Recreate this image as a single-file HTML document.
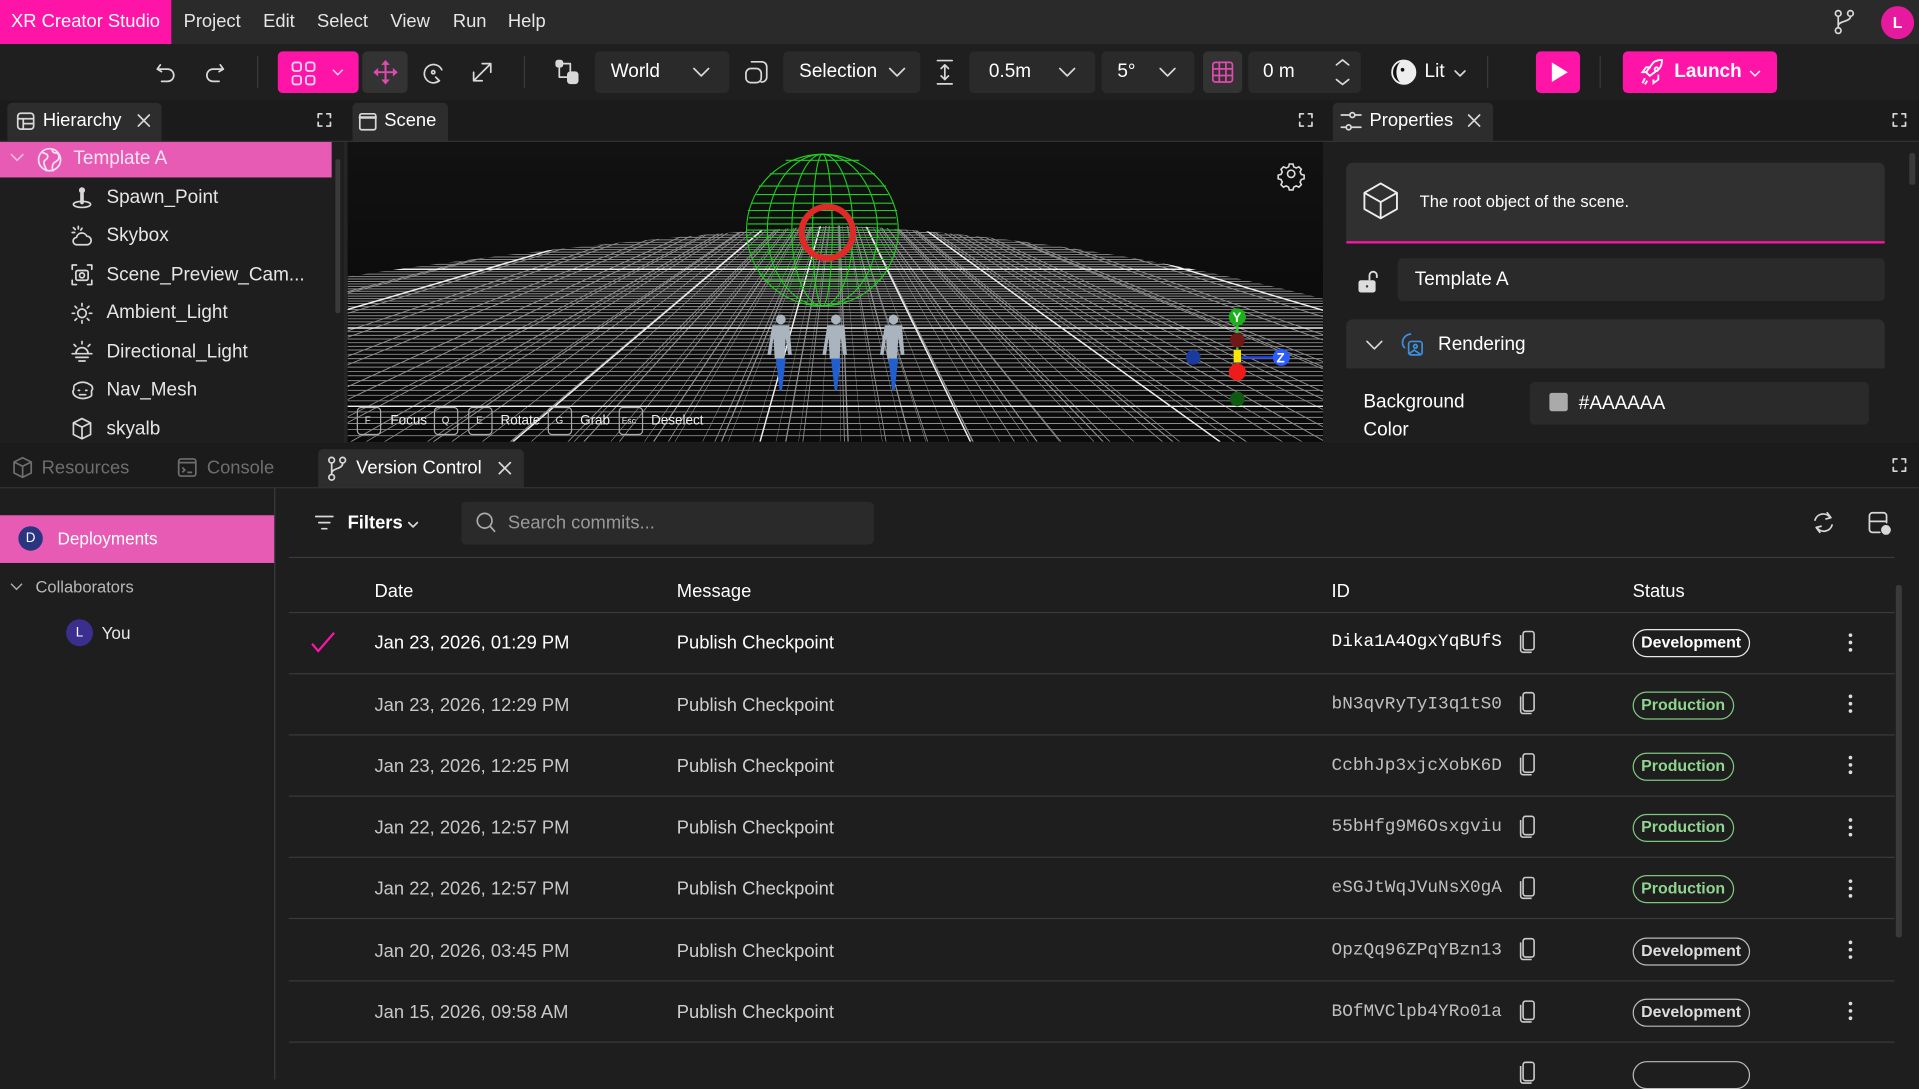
<!DOCTYPE html>
<html><head><meta charset="utf-8">
<style>
*{box-sizing:border-box;margin:0;padding:0}
html,body{width:1919px;height:1079px;overflow:hidden;background:#1e1e1e}
#s{position:absolute;left:0;top:0;width:1568px;height:882px;transform:scale(1.22385);transform-origin:0 0;font-family:"Liberation Sans",sans-serif;color:#e6e6e6;font-size:15px;background:#1e1e1e}
.a{position:absolute}
.t{position:absolute;white-space:nowrap;line-height:1}
svg{position:absolute;overflow:visible}
.ic{fill:none;stroke:#d8d8d8;stroke-width:1.4;stroke-linecap:round;stroke-linejoin:round}
.dd{position:absolute;background:#2a2a2a;border-radius:4px;height:34px;top:42px}
.row{position:absolute;left:236px;width:1312px;height:50px;border-bottom:1px solid #3a3a3a}
.badge{position:absolute;height:23px;border-radius:12px;border:1.3px solid #e8e8e8;font-weight:bold;font-size:13px;line-height:20px;padding:0 6px;color:#fff}
.prod{border-color:#7fc77f;color:#8fd48f}
.id{font-family:"Liberation Mono",monospace;font-size:14.5px}
.tb{font-size:15px}
</style></head><body><div id="s">
<!-- menubar -->
<div class="a" style="left:0;top:0;width:1568px;height:36px;background:#2a2a2a"></div>
<div class="a" style="left:0;top:0;width:140px;height:36px;background:#ff14a8"></div>
<div class="t" style="left:9px;top:10px;color:#fff;font-size:15px">XR Creator Studio</div>
<div class="t" style="left:150px;top:10px;font-size:15px">Project</div>
<div class="t" style="left:215px;top:10px;font-size:15px">Edit</div>
<div class="t" style="left:259px;top:10px;font-size:15px">Select</div>
<div class="t" style="left:319px;top:10px;font-size:15px">View</div>
<div class="t" style="left:370px;top:10px;font-size:15px">Run</div>
<div class="t" style="left:415px;top:10px;font-size:15px">Help</div>
<svg style="left:1498px;top:8px" width="20" height="20" class="ic"><circle cx="4" cy="3" r="2.3"/><circle cx="14" cy="3" r="2.3"/><circle cx="4" cy="17" r="2.3"/><path d="M4 5.5V14.5M14 5.5C14 10 4 9 4 13"/></svg>
<div class="a" style="left:1537px;top:5px;width:27px;height:27px;border-radius:50%;background:#e61a9e;color:#fff;font-size:13px;font-weight:bold;text-align:center;line-height:27px">L</div>
<!-- toolbar -->
<div class="a" style="left:0;top:36px;width:1568px;height:46px;background:#1f1f1f"></div>
<svg style="left:127px;top:50px" width="18" height="18" class="ic"><path d="M4 3L1.5 6.5 5 8.5M2 6.5H10a5 5 0 0 1 0 10H5"/></svg>
<svg style="left:166px;top:50px" width="18" height="18" class="ic"><path d="M14 3l2.5 3.5L13 8.5M16 6.5H8a5 5 0 0 0 0 10h5"/></svg>
<div class="a" style="left:210px;top:46px;width:1px;height:26px;background:#3a3a3a"></div>
<div class="a" style="left:227px;top:42px;width:66px;height:34px;background:#ff14a8;border-radius:4px"></div>
<svg style="left:238px;top:50px" width="20" height="20" fill="none" stroke="#ffd4ee" stroke-width="1.5"><rect x="1" y="1" width="7" height="7" rx="2"/><rect x="12" y="1" width="7" height="7" rx="2"/><rect x="1" y="12" width="7" height="7" rx="2"/><rect x="12" y="12" width="7" height="7" rx="2"/></svg>
<svg style="left:271px;top:56px" width="10" height="6" fill="none" stroke="#ffd4ee" stroke-width="1.2"><path d="M1 1l4 4 4-4"/></svg>
<div class="a" style="left:296px;top:42px;width:37px;height:34px;background:#333;border-radius:4px"></div>
<svg style="left:304px;top:48px" width="22" height="22" fill="#e04ab0" stroke="#e04ab0" stroke-width="1.6"><path d="M11 3V19M3 11H19" /><path d="M11 1l-3.5 4h7zM11 21l-3.5-4h7zM1 11l4-3.5v7zM21 11l-4-3.5v7z" stroke="none"/></svg>
<svg style="left:344px;top:49px" width="20" height="20" class="ic"><path d="M15 17A7.5 7.5 0 1 1 17 8"/><path d="M12 14l3 3-3.5 1.5"/><circle cx="10" cy="10" r="1.3"/></svg>
<svg style="left:384px;top:49px" width="20" height="20" class="ic"><path d="M3 17L17 3M10 3h7v7M3 10v7h7"/></svg>
<div class="a" style="left:428px;top:46px;width:1px;height:26px;background:#3a3a3a"></div>
<svg style="left:453px;top:48px" width="20" height="22" class="ic"><rect x="1.5" y="1.5" width="5" height="5" rx="1.5" fill="#d8d8d8"/><path d="M4 7v8h6M7 4h6v6"/><rect x="11" y="11" width="8" height="9" rx="2" fill="#d8d8d8"/></svg>
<div class="dd" style="left:486px;width:110px"></div>
<div class="t" style="left:499px;top:51px;font-size:15.5px;color:#fff">World</div>
<svg style="left:566px;top:55px" width="14" height="8" class="ic"><path d="M1 1l6 6 6-6"/></svg>
<svg style="left:608px;top:49px" width="20" height="20" class="ic"><path d="M6 1.5h8.5a4 4 0 0 1 4 4V14a4 4 0 0 1-4 4H14M1.5 11a4 4 0 0 1 4-4H10a4 4 0 0 1 4 4v3.5a4 4 0 0 1-4 4H5.5a4 4 0 0 1-4-4z"/></svg>
<div class="dd" style="left:640px;width:112px"></div>
<div class="t" style="left:653px;top:51px;font-size:15.5px;color:#fff">Selection</div>
<svg style="left:726px;top:55px" width="14" height="8" class="ic"><path d="M1 1l6 6 6-6"/></svg>
<svg style="left:764px;top:48px" width="16" height="22" class="ic"><path d="M2 1.5h12M2 20.5h12M8 5v12M5 8l3-3 3 3M5 14l3 3 3-3"/></svg>
<div class="dd" style="left:792px;width:103px"></div>
<div class="t" style="left:808px;top:51px;font-size:15.5px;color:#fff">0.5m</div>
<svg style="left:865px;top:55px" width="14" height="8" class="ic"><path d="M1 1l6 6 6-6"/></svg>
<div class="dd" style="left:900px;width:76px"></div>
<div class="t" style="left:913px;top:51px;font-size:15.5px;color:#fff">5°</div>
<svg style="left:947px;top:55px" width="14" height="8" class="ic"><path d="M1 1l6 6 6-6"/></svg>
<div class="a" style="left:983px;top:42px;width:32px;height:34px;background:#333;border-radius:4px"></div>
<svg style="left:990px;top:50px" width="18" height="18" fill="none" stroke="#e04ab0" stroke-width="1.4"><rect x="1" y="1" width="16" height="16" rx="2"/><path d="M6.3 1v16M11.7 1v16M1 6.3h16M1 11.7h16"/></svg>
<div class="dd" style="left:1020px;width:92px"></div>
<div class="t" style="left:1032px;top:51px;font-size:15.5px;color:#fff">0 m</div>
<svg style="left:1090px;top:47px" width="14" height="24" class="ic"><path d="M2 6l5-4 5 4M2 18l5 4 5-4"/></svg>
<svg style="left:1136px;top:48px" width="22" height="22"><circle cx="11" cy="11" r="9.5" fill="#111" stroke="#eee" stroke-width="1.5"/><path d="M11 1.5a9.5 9.5 0 0 1 0 19a6 9.5 0 0 1 0-19z" fill="#eee"/><circle cx="10" cy="9" r="1.5" fill="#111"/></svg>
<div class="t" style="left:1164px;top:51px;font-size:15.5px;color:#fff">Lit</div>
<svg style="left:1188px;top:57px" width="10" height="6" class="ic"><path d="M1 1l4 4 4-4"/></svg>
<div class="a" style="left:1215px;top:46px;width:1px;height:26px;background:#3a3a3a"></div>
<div class="a" style="left:1255px;top:42px;width:36px;height:34px;background:#ff14a8;border-radius:4px"></div>
<svg style="left:1266px;top:50px" width="16" height="18"><path d="M2 1l13 8-13 8z" fill="#fff"/></svg>
<div class="a" style="left:1307px;top:46px;width:1px;height:26px;background:#3a3a3a"></div>
<div class="a" style="left:1326px;top:42px;width:126px;height:34px;background:#ff14a8;border-radius:4px"></div>
<svg style="left:1340px;top:48px" width="22" height="22" fill="none" stroke="#fff" stroke-width="1.5"><path d="M8 14l-3-3 6-8c2-1.5 5-2 7-2 0 2-.5 5-2 7l-8 6z"/><circle cx="13.5" cy="8.5" r="1.5"/><path d="M5 11l-3 0 3-4h4M11 17l0 3 4-3v-4M4 16l-2 4M6 18l-2 3"/></svg>
<div class="t" style="left:1368px;top:51px;font-size:15.5px;color:#fff;font-weight:bold">Launch</div>
<svg style="left:1429px;top:57px" width="10" height="6" fill="none" stroke="#fff" stroke-width="1.2"><path d="M1 1l4 4 4-4"/></svg>

<!-- top panel tab strips -->
<div class="a" style="left:0;top:82px;width:1568px;height:34px;background:#1b1b1b"></div>
<div class="a" style="left:6px;top:84px;width:126px;height:32px;background:#2d2d2d;border-radius:4px 4px 0 0"></div>
<svg style="left:13px;top:91px" width="16" height="16" class="ic"><rect x="1.5" y="1.5" width="13" height="13" rx="2.5"/><path d="M1.5 6h13M6 6v8.5M6 10h8.5"/></svg>
<div class="t" style="left:35px;top:91px;font-size:15px;color:#fff">Hierarchy</div>
<svg style="left:112px;top:93px" width="11" height="11" class="ic"><path d="M1 1l9 9M10 1l-9 9"/></svg>
<svg style="left:259px;top:92px" width="12" height="12" class="ic"><path d="M1 4V1h3M8 1h3v3M11 8v3H8M4 11H1V8"/></svg>
<div class="a" style="left:288px;top:84px;width:78px;height:32px;background:#2d2d2d;border-radius:4px 4px 0 0"></div>
<svg style="left:293px;top:92px" width="15" height="15" class="ic"><rect x="1" y="1" width="13" height="13" rx="1.5"/><path d="M1 4h13" stroke-width="2"/></svg>
<div class="t" style="left:314px;top:91px;font-size:15px;color:#fff">Scene</div>
<svg style="left:1061px;top:92px" width="12" height="12" class="ic"><path d="M1 4V1h3M8 1h3v3M11 8v3H8M4 11H1V8"/></svg>
<div class="a" style="left:1089px;top:84px;width:131px;height:32px;background:#2d2d2d;border-radius:4px 4px 0 0"></div>
<svg style="left:1095px;top:91px" width="18" height="16" class="ic"><path d="M1 3h7M12 3h5M1 13h4M9 13h8"/><circle cx="10" cy="3" r="2"/><circle cx="7" cy="13" r="2"/></svg>
<div class="t" style="left:1119px;top:91px;font-size:15px;color:#fff">Properties</div>
<svg style="left:1199px;top:93px" width="11" height="11" class="ic"><path d="M1 1l9 9M10 1l-9 9"/></svg>
<svg style="left:1546px;top:92px" width="12" height="12" class="ic"><path d="M1 4V1h3M8 1h3v3M11 8v3H8M4 11H1V8"/></svg>
<div class="a" style="left:0;top:115px;width:1568px;height:1px;background:#333"></div>

<!-- hierarchy -->
<div class="a" style="left:0;top:116px;width:271px;height:29px;background:#e85bb5"></div>
<svg style="left:8px;top:125px" width="12" height="8" fill="none" stroke="#f7c3e3" stroke-width="1.2"><path d="M1 1l5 5 5-5"/></svg>
<svg style="left:30px;top:120px" width="21" height="21" fill="none" stroke="#fde0f1" stroke-width="1.4"><circle cx="10.5" cy="10.5" r="9"/><path d="M4 4c2 2 5 1 5 4s-4 2-3 6 2 3 2 6M13 2c-1 2 1 3 3 3s3 4 1 6-3 1-4 4 1 4 0 5"/></svg>
<div class="t" style="left:60px;top:122px;font-size:15.5px;color:#fde6f3">Template A</div>
<div class="t" style="left:87px;top:154px;font-size:15.5px">Spawn_Point</div>
<div class="t" style="left:87px;top:185px;font-size:15.5px">Skybox</div>
<div class="t" style="left:87px;top:217px;font-size:15.5px">Scene_Preview_Cam...</div>
<div class="t" style="left:87px;top:248px;font-size:15.5px">Ambient_Light</div>
<div class="t" style="left:87px;top:280px;font-size:15.5px">Directional_Light</div>
<div class="t" style="left:87px;top:311px;font-size:15.5px">Nav_Mesh</div>
<div class="t" style="left:87px;top:343px;font-size:15.5px">skyalb</div>
<svg style="left:58px;top:153px" width="18" height="18" class="ic"><circle cx="9" cy="2.5" r="1.8" fill="#d8d8d8"/><path d="M9 5.5v7" stroke-width="3"/><ellipse cx="9" cy="14" rx="7" ry="2.5"/></svg>
<svg style="left:58px;top:184px" width="18" height="18" class="ic"><path d="M5 16h8a3.5 3.5 0 0 0 0-7 4.5 4.5 0 0 0-8.5 1A3 3 0 0 0 5 16zM2 2l1.5 1.5M6 1v2M1 6h2M9 2.5L8 4"/></svg>
<svg style="left:58px;top:215px" width="18" height="19" class="ic"><path d="M1 5V1.5h3.5M13.5 1.5H17V5M17 14v3.5h-3.5M4.5 17.5H1V14"/><rect x="4" y="6" width="10" height="8" rx="1.5"/><circle cx="9" cy="10" r="2"/></svg>
<svg style="left:58px;top:247px" width="18" height="18" class="ic"><circle cx="9" cy="9" r="3.5"/><path d="M9 1v2M9 15v2M1 9h2M15 9h2M3.3 3.3l1.4 1.4M13.3 13.3l1.4 1.4M3.3 14.7l1.4-1.4M13.3 4.7l1.4-1.4"/></svg>
<svg style="left:58px;top:278px" width="18" height="18" class="ic"><path d="M4 11a5 5 0 0 1 10 0zM1 11h16M4 14h10M6.5 17h5M9 1v2M2.5 3.5l1.5 1.5M15.5 3.5L14 5"/></svg>
<svg style="left:58px;top:310px" width="19" height="18" class="ic"><path d="M4 4a8 6 0 0 1 11 0M15 4c3 1 3 4 2 5s1 4-1 5-7 3-12 0c-2-1-3-4-2-5s-1-4 2-5"/><path d="M6 9h1M12 9h1M7 12.5h5"/></svg>
<svg style="left:58px;top:341px" width="18" height="18" class="ic"><path d="M9 1l7 3.5V14l-7 3.5L2 14V4.5zM2 4.5l7 3.5 7-3.5M9 8v9"/></svg>
<div class="a" style="left:274px;top:130px;width:4px;height:126px;background:#3a3a3a;border-radius:2px"></div>
<div class="a" style="left:281px;top:116px;width:3px;height:246px;background:#252525"></div>

<!-- scene -->
<div class="a" style="left:284px;top:116px;width:797px;height:245px;overflow:hidden;background:linear-gradient(#121212,#050505)">
<svg width="797" height="245" viewBox="0 0 797 245">
<defs><clipPath id="cp"><path d="M0 110 Q 200 80 400 68 Q 600 78 797 128 L797 245 L0 245Z"/></clipPath></defs>
<g clip-path="url(#cp)">
<rect width="797" height="245" fill="#0a0a0a"/>
<g stroke="#8a8a8a" stroke-width="0.8">
<path d="M0 70H797M0 72H797M0 74H797M0 76H797M0 78H797M0 80H797M0 82H797M0 84H797M0 86H797M0 88H797M0 90H797M0 92H797M0 94H797M0 96H797M0 98H797M0 100H797M0 102H797M0 104H797M0 106H797M0 108H797M0 110H797M0 112H797M0 114H797M0 116H797M0 118H797M0 120H797M0 122H797M0 124H797M0 126H797M0 128H797M0 130H797M0 132H797M0 134.5H797M0 137H797M0 139.5H797M0 142H797M0 144.5H797M0 147H797M0 149.5H797M0 152H797M0 155H797M0 158H797M0 161H797M0 164H797M0 167H797M0 170H797M0 173.5H797M0 177H797M0 180.5H797M0 184H797M0 187.5H797M0 191H797M0 195H797M0 199H797M0 203H797M0 207H797M0 211.5H797M0 216H797M0 220.5H797M0 225H797M0 230H797M0 235H797M0 240H797"/>
</g>
<g id="vl" stroke="#8f8f8f" stroke-width="0.7">
<path d="M400 20L-600 245M400 20L-480 245M400 20L-370 245M400 20L-270 245M400 20L-180 245M400 20L-100 245M400 20L-30 245M400 20L30 245M400 20L85 245M400 20L135 245M400 20L180 245M400 20L222 245M400 20L262 245M400 20L300 245M400 20L337 245M400 20L372 245M400 20L406 245M400 20L440 245M400 20L474 245M400 20L509 245M400 20L545 245M400 20L583 245M400 20L623 245M400 20L666 245M400 20L713 245M400 20L764 245M400 20L820 245M400 20L885 245M400 20L960 245M400 20L1050 245M400 20L1160 245M400 20L1300 245M400 20L1480 245"/>
</g>
<use href="#vl" transform="translate(400,0) scale(1.5,1) translate(-400,0)"/>
<use href="#vl" transform="translate(400,0) scale(0.5,1) translate(-400,0)"/>
<g stroke="#eee" stroke-width="1.2">
<path d="M0 104H797M0 152H797M0 216H797M400 20L-370 245M400 20L135 245M400 20L337 245M400 20L509 245M400 20L713 245M400 20L1160 245"/>
</g>
</g>
<g fill="none" stroke="#1fcf1f" stroke-width="0.9">
<circle cx="388" cy="72" r="62"/>
<ellipse cx="388" cy="72" rx="45" ry="62"/><ellipse cx="388" cy="72" rx="25" ry="62"/><ellipse cx="388" cy="72" rx="8" ry="62"/>
<path d="M330 50H446M328 62H448M326 72H450M328 84H448M330 96H446M336 108H440M345 118H431M345 26H431M336 36H440M358 15H418M334 43H442M327 56H449M327 67H449M327 78H449M328 90H448M333 102H443M340 113H436"/>
</g>
<circle cx="392" cy="74" r="21" fill="none" stroke="#e02a2a" stroke-width="5"/>
<g fill="#aab4bf">
<g transform="translate(354,140)"><circle cx="0" cy="5" r="4"/><path d="M-7 10h14l2 24h-3l-2-14 -1 17h-8l-1-17-2 14h-3z"/><path d="M-4 37h8l-3 26h-2z" fill="#1f5fcf"/></g>
<g transform="translate(399,140)"><circle cx="0" cy="5" r="4"/><path d="M-7 10h14l2 24h-3l-2-14 -1 17h-8l-1-17-2 14h-3z"/><path d="M-4 37h8l-3 26h-2z" fill="#1f5fcf"/></g>
<g transform="translate(446,140)"><circle cx="0" cy="5" r="4"/><path d="M-7 10h14l2 24h-3l-2-14 -1 17h-8l-1-17-2 14h-3z"/><path d="M-4 37h8l-3 26h-2z" fill="#1f5fcf"/></g>
</g>
<g transform="translate(727,176)">
<path d="M0 0H36" stroke="#1f3fe0" stroke-width="2"/><path d="M0 0V-30" stroke="#2bd12b" stroke-width="2"/>
<rect x="-3" y="-6" width="6" height="10" fill="#ffe600"/>
<circle cx="0" cy="-33" r="7" fill="#19b319"/><text x="-4" y="-29" font-size="11" font-weight="bold" fill="#fff" font-family="Liberation Sans">Y</text>
<circle cx="36" cy="0" r="7" fill="#2b5cff"/><text x="32" y="4" font-size="11" font-weight="bold" fill="#fff" font-family="Liberation Sans">Z</text>
<circle cx="0" cy="-14" r="6" fill="#701818"/><circle cx="0" cy="12" r="7" fill="#ee1b1b"/>
<circle cx="-36" cy="0" r="6" fill="#1b3a9e"/><circle cx="0" cy="34" r="6" fill="#0f5a12"/>
</g>
<g font-family="Liberation Sans" font-size="11" fill="#eee"><g fill="none" stroke="#aaa" stroke-width="1"><rect x="8" y="217" width="19" height="22" rx="3"/><rect x="71" y="217" width="19" height="22" rx="3"/><rect x="99" y="217" width="19" height="22" rx="3"/><rect x="164" y="217" width="19" height="22" rx="3"/><rect x="222" y="217" width="19" height="22" rx="3"/></g>
<text x="14" y="230" font-size="8">F</text><text x="35" y="231">Focus</text><text x="77" y="230" font-size="8">Q</text><text x="105" y="230" font-size="8">E</text><text x="125" y="231">Rotate</text><text x="170" y="230" font-size="8">G</text><text x="190" y="231">Grab</text><text x="224" y="230" font-size="7">Esc</text><text x="248" y="231">Deselect</text></g>
<g transform="translate(771,26)" fill="none" stroke="#ddd" stroke-width="1.3"><circle r="3"/><path d="M-1.5-8h3l.6 2.3 2 1 2.2-1 2 2-1 2.2 1 2 2.3.6v3l-2.3.6-1 2 1 2.2-2 2-2.2-1-2 1-.6 2.3h-3l-.6-2.3-2-1-2.2 1-2-2 1-2.2-1-2-2.3-.6v-3l2.3-.6 1-2-1-2.2 2-2 2.2 1 2-1z"/></g>
</svg></div>

<!-- properties -->
<div class="a" style="left:1100px;top:133px;width:440px;height:66px;background:#303030;border-radius:5px 5px 0 0;border-bottom:2px solid #ff14a8"></div>
<svg style="left:1112px;top:148px" width="34" height="34" fill="none" stroke="#eee" stroke-width="1.6" stroke-linejoin="round"><path d="M17 2l14 8v14l-14 8-14-8V10zM3 10l14 8 14-8M17 18v14" transform="scale(0.95)"/></svg>
<div class="t" style="left:1160px;top:158px;font-size:13.5px;color:#fff">The root object of the scene.</div>
<svg style="left:1109px;top:220px" width="20" height="20"><rect x="1" y="9" width="14" height="10" rx="2" fill="#ddd"/><path d="M10 9V5a3 3 0 0 1 6 0v2" fill="none" stroke="#ddd" stroke-width="1.5"/><circle cx="8" cy="14" r="1" fill="#333"/></svg>
<div class="a" style="left:1142px;top:211px;width:398px;height:35px;background:#2a2a2a;border-radius:4px"></div>
<div class="t" style="left:1156px;top:221px;font-size:15.5px;color:#fff">Template A</div>
<div class="a" style="left:1100px;top:261px;width:440px;height:40px;background:#2e2e2e;border-radius:5px 5px 0 0"></div>
<svg style="left:1116px;top:278px" width="14" height="8" class="ic"><path d="M1 1l6 6 6-6"/></svg>
<svg style="left:1144px;top:271px" width="20" height="20" fill="none" stroke="#3d8fe0" stroke-width="1.4"><path d="M9 2a7 7 0 0 0-7 7c0 2 1 3.5 2 4.5"/><rect x="7" y="8" width="11" height="11" rx="2"/><circle cx="12.5" cy="12" r="1.5"/><path d="M7.5 18l4-3 6 4"/></svg>
<div class="t" style="left:1175px;top:274px;font-size:15.5px;color:#fff">Rendering</div>
<div class="t" style="left:1114px;top:321px;font-size:15.5px;color:#fff">Background</div>
<div class="t" style="left:1114px;top:344px;font-size:15.5px;color:#fff">Color</div>
<div class="a" style="left:1250px;top:312px;width:277px;height:35px;background:#2a2a2a;border-radius:4px"></div>
<div class="a" style="left:1266px;top:321px;width:15px;height:15px;background:#aaa;border-radius:2px"></div>
<div class="t" style="left:1290px;top:322px;font-size:15.5px;color:#fff">#AAAAAA</div>
<div class="a" style="left:1560px;top:125px;width:5px;height:26px;background:#3a3a3a;border-radius:2px"></div>

<!-- bottom tabs -->
<div class="a" style="left:0;top:362px;width:1568px;height:36px;background:#1b1b1b"></div>
<svg style="left:10px;top:373px" width="17" height="18" fill="none" stroke="#6e6e6e" stroke-width="1.4"><path d="M8.5 1l7 3.5v9l-7 3.5-7-3.5v-9zM1.5 4.5l7 3.5 7-3.5M8.5 8v9"/></svg>
<div class="t" style="left:34px;top:375px;font-size:15px;color:#6e6e6e">Resources</div>
<svg style="left:145px;top:374px" width="16" height="16" fill="none" stroke="#6e6e6e" stroke-width="1.4"><rect x="1" y="1" width="14" height="14" rx="2"/><path d="M1 4h14M4 8l2 2-2 2M8 12h4"/></svg>
<div class="t" style="left:169px;top:375px;font-size:15px;color:#6e6e6e">Console</div>
<div class="a" style="left:260px;top:367px;width:168px;height:31px;background:#2d2d2d;border-radius:4px 4px 0 0"></div>
<svg style="left:267px;top:373px" width="18" height="20" class="ic"><circle cx="4" cy="3" r="2.3"/><circle cx="13" cy="3" r="2.3"/><circle cx="4" cy="17" r="2.3"/><path d="M4 5.5v9M13 5.5c0 5-9 4-9 8"/></svg>
<div class="t" style="left:291px;top:375px;font-size:15px;color:#fff">Version Control</div>
<svg style="left:407px;top:377px" width="11" height="11" class="ic"><path d="M1 1l9 9M10 1l-9 9"/></svg>
<svg style="left:1546px;top:374px" width="12" height="12" class="ic"><path d="M1 4V1h3M8 1h3v3M11 8v3H8M4 11H1V8"/></svg>
<div class="a" style="left:0;top:398px;width:1568px;height:1px;background:#333"></div>

<!-- left sidebar -->
<div class="a" style="left:224px;top:399px;width:1px;height:483px;background:#3a3a3a"></div>
<div class="a" style="left:0;top:421px;width:224px;height:39px;background:#e85bb5"></div>
<div class="a" style="left:15px;top:430px;width:20px;height:20px;border-radius:50%;background:#2a3580;color:#fff;font-size:11px;text-align:center;line-height:20px">D</div>
<div class="t" style="left:47px;top:433px;font-size:14px;color:#fff">Deployments</div>
<svg style="left:8px;top:476px" width="11" height="7" fill="none" stroke="#aaa" stroke-width="1.2"><path d="M1 1l4.5 4.5L10 1"/></svg>
<div class="t" style="left:29px;top:473px;font-size:13.5px;color:#b8b8b8">Collaborators</div>
<div class="a" style="left:54px;top:506px;width:22px;height:22px;border-radius:50%;background:#3a2f8f;color:#fff;font-size:11px;text-align:center;line-height:22px">L</div>
<div class="t" style="left:83px;top:510px;font-size:14px;color:#e8e8e8">You</div>

<!-- VC toolbar -->
<svg style="left:257px;top:420px" width="16" height="14" class="ic"><path d="M1 2h14M3.5 7h9M6 12h4"/></svg>
<div class="t" style="left:284px;top:420px;font-size:15px;color:#fff;font-weight:bold">Filters</div>
<svg style="left:333px;top:426px" width="9" height="6" class="ic"><path d="M1 1l3.5 3.5L8 1"/></svg>
<div class="a" style="left:377px;top:410px;width:337px;height:35px;background:#2a2a2a;border-radius:4px"></div>
<svg style="left:388px;top:418px" width="18" height="18" fill="none" stroke="#aaa" stroke-width="1.4"><circle cx="8" cy="7.5" r="6"/><path d="M12.5 12l4 4.5"/></svg>
<div class="t" style="left:415px;top:420px;font-size:15px;color:#9a9a9a">Search commits...</div>
<svg style="left:1480px;top:416px" width="20" height="22" class="ic"><path d="M15.5 7A7 7 0 0 0 3 9M4.5 15A7 7 0 0 0 17 13"/><path d="M13 3l3 4-4 1M7 19l-3-4 4-1"/></svg>
<svg style="left:1526px;top:418px" width="20" height="20" class="ic"><path d="M10 17H4a2.5 2.5 0 0 1-2.5-2.5v-11A2.5 2.5 0 0 1 4 1h9a2.5 2.5 0 0 1 2.5 2.5V9M1.5 8h14"/><circle cx="15" cy="15" r="3" fill="#d8d8d8" stroke-width="2" stroke-dasharray="1.5 1"/></svg>
<div class="a" style="left:236px;top:455px;width:1312px;height:1px;background:#3a3a3a"></div>

<!-- table -->
<div class="t tb" style="left:306px;top:476px;color:#fff">Date</div>
<div class="t tb" style="left:553px;top:476px;color:#fff">Message</div>
<div class="t tb" style="left:1088px;top:476px;color:#fff">ID</div>
<div class="t tb" style="left:1334px;top:476px;color:#fff">Status</div>
<div class="a" style="left:236px;top:500px;width:1312px;height:1px;background:#3a3a3a"></div>
<div class="a" style="left:1549px;top:478px;width:5px;height:288px;background:#3a3a3a;border-radius:2px"></div>

<svg style="left:254px;top:516px" width="20" height="18" fill="none" stroke="#ff14a8" stroke-width="1.8"><path d="M1 10l5 6L19 1"/></svg>

<div class="row" style="top:501px"></div>
<div class="row" style="top:551px"></div>
<div class="row" style="top:601px"></div>
<div class="row" style="top:651px"></div>
<div class="row" style="top:701px"></div>
<div class="row" style="top:752px"></div>
<div class="row" style="top:802px"></div>

<div class="t tb" style="left:306px;top:518px;color:#fff">Jan 23, 2026, 01:29 PM</div>
<div class="t tb" style="left:553px;top:518px;color:#fff">Publish Checkpoint</div>
<div class="t id" style="left:1088px;top:518px;color:#fff">Dika1A4OgxYqBUfS</div>
<div class="badge" style="left:1334px;top:514px">Development</div>

<div class="t tb" style="left:306px;top:569px;color:#c8c8c8">Jan 23, 2026, 12:29 PM</div>
<div class="t tb" style="left:553px;top:569px;color:#d0d0d0">Publish Checkpoint</div>
<div class="t id" style="left:1088px;top:569px;color:#c0c0c0">bN3qvRyTyI3q1tS0</div>
<div class="badge prod" style="left:1334px;top:565px">Production</div>

<div class="t tb" style="left:306px;top:619px;color:#c8c8c8">Jan 23, 2026, 12:25 PM</div>
<div class="t tb" style="left:553px;top:619px;color:#d0d0d0">Publish Checkpoint</div>
<div class="t id" style="left:1088px;top:619px;color:#c0c0c0">CcbhJp3xjcXobK6D</div>
<div class="badge prod" style="left:1334px;top:615px">Production</div>

<div class="t tb" style="left:306px;top:669px;color:#c8c8c8">Jan 22, 2026, 12:57 PM</div>
<div class="t tb" style="left:553px;top:669px;color:#d0d0d0">Publish Checkpoint</div>
<div class="t id" style="left:1088px;top:669px;color:#c0c0c0">55bHfg9M6Osxgviu</div>
<div class="badge prod" style="left:1334px;top:665px">Production</div>

<div class="t tb" style="left:306px;top:719px;color:#c8c8c8">Jan 22, 2026, 12:57 PM</div>
<div class="t tb" style="left:553px;top:719px;color:#d0d0d0">Publish Checkpoint</div>
<div class="t id" style="left:1088px;top:719px;color:#c0c0c0">eSGJtWqJVuNsX0gA</div>
<div class="badge prod" style="left:1334px;top:715px">Production</div>

<div class="t tb" style="left:306px;top:770px;color:#c8c8c8">Jan 20, 2026, 03:45 PM</div>
<div class="t tb" style="left:553px;top:770px;color:#d0d0d0">Publish Checkpoint</div>
<div class="t id" style="left:1088px;top:770px;color:#c0c0c0">OpzQq96ZPqYBzn13</div>
<div class="badge" style="left:1334px;top:766px;color:#ddd;border-color:#bbb">Development</div>

<div class="t tb" style="left:306px;top:820px;color:#c8c8c8">Jan 15, 2026, 09:58 AM</div>
<div class="t tb" style="left:553px;top:820px;color:#d0d0d0">Publish Checkpoint</div>
<div class="t id" style="left:1088px;top:820px;color:#c0c0c0">BOfMVClpb4YRo01a</div>
<div class="badge" style="left:1334px;top:816px;color:#ddd;border-color:#bbb">Development</div>

<div class="badge" style="left:1334px;top:867px;color:#ddd;border-color:#bbb;width:96px"></div>

<svg style="left:1241px;top:515px" width="14" height="355" fill="none" stroke="#ccc" stroke-width="1.3">
<g id="cp1"><rect x="3.5" y="1" width="9" height="15" rx="2"/><path d="M1.5 4v12a2 2 0 0 0 2 2h7"/></g>
<use href="#cp1" y="50"/><use href="#cp1" y="100"/><use href="#cp1" y="151"/><use href="#cp1" y="201"/><use href="#cp1" y="251"/><use href="#cp1" y="302"/><use href="#cp1" y="352"/>
</svg>
<svg style="left:1509px;top:517px" width="6" height="320" fill="#ddd">
<g id="dt"><circle cx="3" cy="2" r="1.5"/><circle cx="3" cy="8" r="1.5"/><circle cx="3" cy="14" r="1.5"/></g>
<use href="#dt" y="50"/><use href="#dt" y="100"/><use href="#dt" y="151"/><use href="#dt" y="201"/><use href="#dt" y="251"/><use href="#dt" y="301"/>
</svg>
</div></body></html>
